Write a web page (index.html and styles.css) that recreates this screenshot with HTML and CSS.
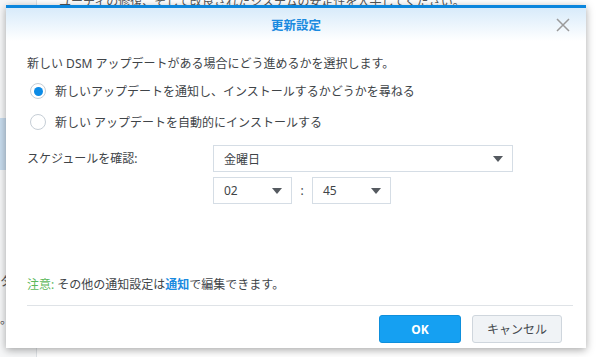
FILE: index.html
```html
<!DOCTYPE html>
<html lang="ja">
<head>
  <meta charset="UTF-8">
  <title>更新設定</title>
  <link rel="stylesheet" href="styles.css">
</head>
<body>
  <div class="desk">
    <div class="side">
      <div class="side-sel"></div>
      <div class="side-frag f1">タ</div>
      <div class="side-frag f2">。:</div>
    </div>
    <div class="main">
      <p class="bg-text">ユーティの修復、そして改良されたシステムの安定性を入手してください。</p>
    </div>
  </div>

  <div class="dialog">
    <div class="dlg-head">
      <span class="dlg-title">更新設定</span>
      <svg class="dlg-close" width="14" height="14" viewBox="0 0 14 14">
        <path d="M1 1 L13 13 M13 1 L1 13" stroke="#9a9a9a" stroke-width="1.5" fill="none"/>
      </svg>
    </div>
    <div class="dlg-body">
      <p class="intro">新しい DSM アップデートがある場合にどう進めるかを選択します。</p>
      <label class="radio-row">
        <span class="radio on"></span>
        新しいアップデートを通知し、インストールするかどうかを尋ねる
      </label>
      <label class="radio-row">
        <span class="radio"></span>
        新しい アップデートを自動的にインストールする
      </label>

      <div class="sched">
        <span class="sched-label">スケジュールを確認:</span>
        <div class="sched-fields">
          <div class="select wide"><span>金曜日</span><i class="caret"></i></div>
          <div class="time-row">
            <div class="select small"><span>02</span><i class="caret"></i></div>
            <span class="colon">:</span>
            <div class="select small"><span>45</span><i class="caret"></i></div>
          </div>
        </div>
      </div>

      <p class="note"><span class="note-tag">注意:</span> その他の通知設定は<a class="note-link">通知</a>で編集できます。</p>
    </div>
    <div class="dlg-foot">
      <button type="button" class="btn btn-ok">OK</button>
      <button type="button" class="btn btn-cancel">キャンセル</button>
    </div>
  </div>
</body>
</html>
```

FILE: styles.css
```css
html, body {
  margin: 0;
  padding: 0;
}
body {
  width: 600px;
  height: 357px;
  overflow: hidden;
  position: relative;
  background: #fff;
  font-family: "Noto Sans", "Noto Sans CJK JP", sans-serif;
  color: #404448;
}
.desk {
  display: flex;
  height: 100%;
}
.side {
  position: relative;
  width: 36px;
  border-right: 1px solid #dfe3e7;
  background: #f6f7f8;
}
.side-sel {
  position: absolute;
  left: 0;
  top: 118px;
  width: 36px;
  height: 52px;
  background: #c8dcee;
}
.side-frag {
  position: absolute;
  left: 0;
  font-size: 12px;
  color: #555;
}
.f1 { top: 272px; }
.f2 { top: 310px; }
.main {
  flex: 1;
  background: #fff;
}
.bg-text {
  margin: -8px 0 0 22px;
  font-size: 12px;
  color: #555;
  white-space: nowrap;
}

.dialog {
  position: absolute;
  left: 6px;
  top: 5px;
  width: 580px;
  height: 343px;
  box-sizing: border-box;
  background: #fff;
  border-top: 3px solid #0b86dd;
  box-shadow: 0 2px 8px rgba(0, 0, 0, 0.35);
  display: flex;
  flex-direction: column;
}
.dlg-head {
  position: relative;
  height: 33px;
  background: linear-gradient(#d8ebfa, #ffffff);
  display: flex;
  align-items: center;
  justify-content: center;
}
.dlg-title {
  color: #1a8ae0;
  font-weight: bold;
  font-size: 12.5px;
}
.dlg-close {
  position: absolute;
  right: 16px;
  top: 10px;
}
.dlg-body {
  flex: 1;
  padding: 13px 21px 0;
  font-size: 12px;
}
.intro {
  margin: 0 0 11px;
}
.radio-row {
  display: flex;
  align-items: center;
  gap: 9px;
  height: 16px;
  margin: 0 0 15px 3px;
}
.radio-row + .radio-row {
  margin-top: 1px;
}
.radio {
  width: 16px;
  height: 16px;
  border: 1px solid #c6ced6;
  border-radius: 50%;
  box-sizing: border-box;
  background: #fff;
  display: flex;
  align-items: center;
  justify-content: center;
}
.radio.on::after {
  content: "";
  width: 9px;
  height: 9px;
  border-radius: 50%;
  background: #0c8be6;
}
.sched {
  display: flex;
  margin-top: 9px;
}
.sched-label {
  width: 186px;
  padding-top: 4px;
}
.sched-fields {
  display: flex;
  flex-direction: column;
  gap: 5px;
}
.select {
  display: flex;
  align-items: center;
  justify-content: space-between;
  box-sizing: border-box;
  height: 27px;
  border: 1px solid #d5dde5;
  padding: 0 9px 0 10px;
  background: #fff;
}
.select.wide { width: 300px; }
.select.small { width: 79px; }
.caret {
  width: 0;
  height: 0;
  border-left: 5px solid transparent;
  border-right: 5px solid transparent;
  border-top: 6px solid #555a60;
}
.time-row {
  display: flex;
  align-items: center;
}
.colon {
  width: 20px;
  text-align: center;
}
.note {
  margin: 71px 0 0;
}
.note-tag {
  color: #5cb85c;
}
.note-link {
  color: #1a8ae0;
  font-weight: bold;
}
.dlg-foot {
  margin: 0 13px 5px 21px;
  border-top: 1px solid #dfe3e7;
  padding-top: 9px;
  display: flex;
  justify-content: flex-end;
  gap: 11px;
  padding-right: 11px;
}
.btn {
  height: 28px;
  border-radius: 3px;
  font-size: 12px;
  font-family: inherit;
  padding: 0;
}
.btn-ok {
  width: 82px;
  background: #15a0f2;
  border: 1px solid #0e8fdc;
  color: #fff;
  font-weight: bold;
}
.btn-cancel {
  width: 90px;
  background: #f0f3f6;
  border: 1px solid #cfd6dd;
  color: #45494e;
}
```
